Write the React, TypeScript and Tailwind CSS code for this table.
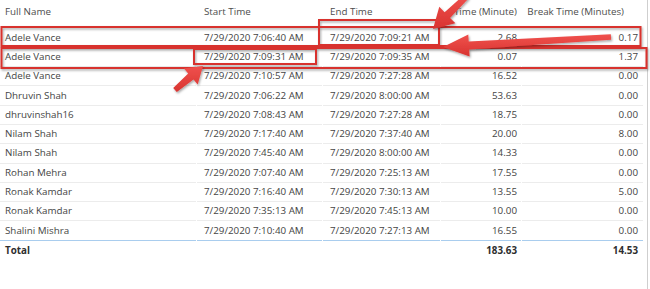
import React from "react";

const rows = [
  ["Adele Vance", "7/29/2020 7:06:40 AM", "7/29/2020 7:09:21 AM", "2.68", "0.17"],
  ["Adele Vance", "7/29/2020 7:09:31 AM", "7/29/2020 7:09:35 AM", "0.07", "1.37"],
  ["Adele Vance", "7/29/2020 7:10:57 AM", "7/29/2020 7:27:28 AM", "16.52", "0.00"],
  ["Dhruvin Shah", "7/29/2020 7:06:22 AM", "7/29/2020 8:00:00 AM", "53.63", "0.00"],
  ["dhruvinshah16", "7/29/2020 7:08:43 AM", "7/29/2020 7:27:28 AM", "18.75", "0.00"],
  ["Nilam Shah", "7/29/2020 7:17:40 AM", "7/29/2020 7:37:40 AM", "20.00", "8.00"],
  ["Nilam Shah", "7/29/2020 7:45:40 AM", "7/29/2020 8:00:00 AM", "14.33", "0.00"],
  ["Rohan Mehra", "7/29/2020 7:07:40 AM", "7/29/2020 7:25:13 AM", "17.55", "0.00"],
  ["Ronak Kamdar", "7/29/2020 7:16:40 AM", "7/29/2020 7:30:13 AM", "13.55", "5.00"],
  ["Ronak Kamdar", "7/29/2020 7:35:13 AM", "7/29/2020 7:45:13 AM", "10.00", "0.00"],
  ["Shalini Mishra", "7/29/2020 7:10:40 AM", "7/29/2020 7:27:13 AM", "16.55", "0.00"],
];

const cols = "grid grid-cols-[196px_125px_117px_80px_121px] gap-x-px";
const pads = ["pl-[5px]", "pl-[7px]", "pl-[7px]", "pr-[4px] justify-end", "pr-[5px] justify-end"];

// arrow polygon from tail to tip: shaft width, head width, head length
function arrow(tx: number, ty: number, px: number, py: number, sw: number, hw: number, hl: number) {
  const dx = px - tx;
  const dy = py - ty;
  const len = Math.hypot(dx, dy);
  const ux = dx / len;
  const uy = dy / len;
  const nx = -uy;
  const ny = ux;
  const bx = px - ux * hl;
  const by = py - uy * hl;
  const pts = [
    [tx + nx * sw * 0.35, ty + ny * sw * 0.35],
    [bx + nx * sw * 0.5, by + ny * sw * 0.5],
    [bx + nx * hw * 0.5, by + ny * hw * 0.5],
    [px, py],
    [bx - nx * hw * 0.5, by - ny * hw * 0.5],
    [bx - nx * sw * 0.5, by - ny * sw * 0.5],
    [tx - nx * sw * 0.35, ty - ny * sw * 0.35],
  ];
  return pts.map((p) => p.map((v) => v.toFixed(1)).join(",")).join(" ");
}

function Overlay() {
  return (
    <svg className="absolute inset-0 pointer-events-none" width={650} height={289} viewBox="0 0 650 289">
      <defs>
        <filter id="sh" x="-20%" y="-50%" width="140%" height="200%">
          <feDropShadow dx="1" dy="1.5" stdDeviation="1" floodColor="#000" floodOpacity="0.35" />
        </filter>
        <linearGradient id="ag" x1="0" y1="0" x2="0" y2="1">
          <stop offset="0" stopColor="#f0514d" />
          <stop offset="1" stopColor="#d83431" />
        </linearGradient>
      </defs>
      <g fill="none" stroke="#d8312e" strokeWidth={2} filter="url(#sh)">
        <rect x={1.5} y={27} width={639} height={19} />
        <rect x={1.5} y={48} width={645} height={20} />
        <rect x={319} y={20} width={120} height={25} />
        <rect x={194} y={49} width={122} height={15} />
      </g>
      <g fill="url(#ag)" filter="url(#sh)" strokeLinejoin="round">
        <polygon points={arrow(467, -4, 433, 29, 8, 23, 20)} />
        <polygon points={arrow(611, 37, 443, 47, 8, 22, 26)} />
        <polygon points={arrow(175, 90, 203, 66, 8, 21, 16)} />
      </g>
    </svg>
  );
}

export default function App() {
  return (
    <div className="relative w-[650px] h-[289px] bg-white overflow-hidden font-['Open_Sans',sans-serif] text-[9.8px] leading-[14px]">
      <div className="w-[648px] h-full border-r border-[#cfcfcf]">
        <div className={`${cols} h-[28.5px] text-[#4d4d4d]`}>
          <div className={`flex items-start pt-[5px] ${pads[0]}`}>Full Name</div>
          <div className={`flex items-start pt-[5px] ${pads[1]}`}>Start Time</div>
          <div className={`flex items-start pt-[5px] ${pads[2]}`}>End Time</div>
          <div className={`flex items-start pt-[5px] whitespace-nowrap ${pads[3]}`}>Time (Minute)</div>
          <div className="flex items-start justify-end pt-[5px] pr-[19px] whitespace-nowrap">Break Time (Minutes)</div>
        </div>
        {rows.map((r, i) => (
          <div key={i} className={`${cols} h-[19.3px] text-[#444]`}>
            {r.map((c, j) => (
              <div
                key={j}
                className={`flex items-center whitespace-nowrap border-b ${
                  i === rows.length - 1 ? "border-[#a9cdee]" : "border-[#ececec]"
                } ${pads[j]}`}
              >
                {c}
              </div>
            ))}
          </div>
        ))}
        <div className={`${cols} h-[20px] font-bold text-[#2e2e2e]`}>
          <div className={`flex items-center ${pads[0]}`}>Total</div>
          <div />
          <div />
          <div className={`flex items-center ${pads[3]}`}>183.63</div>
          <div className={`flex items-center ${pads[4]}`}>14.53</div>
        </div>
      </div>
      <Overlay />
    </div>
  );
}
